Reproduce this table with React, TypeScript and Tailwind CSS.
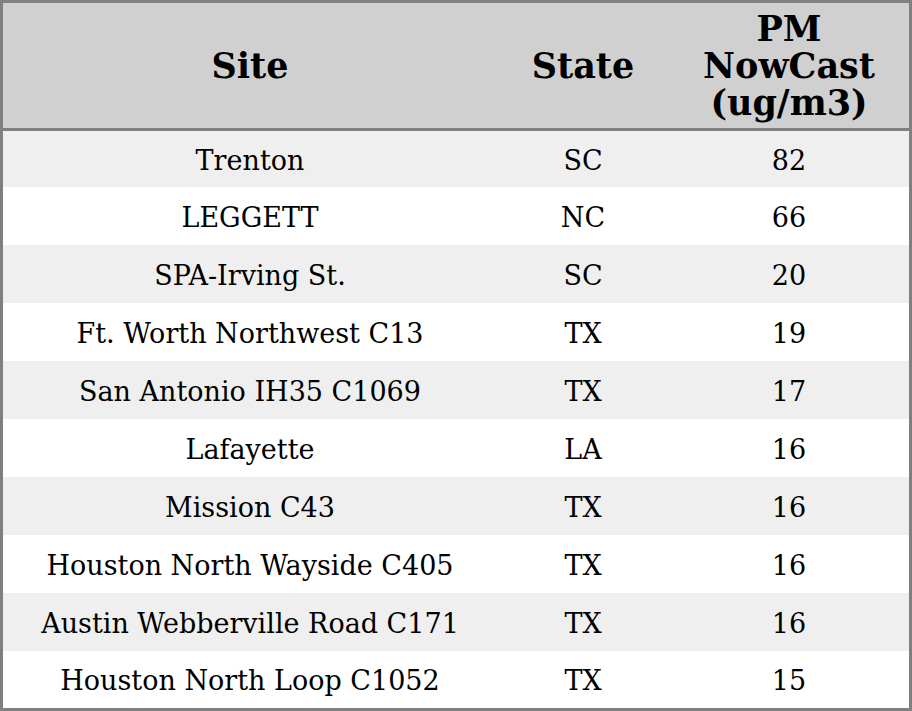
import React from 'react';

const rows: [string, string, string][] = [
    ['Trenton', 'SC', '82'],
    ['LEGGETT', 'NC', '66'],
    ['SPA-Irving St.', 'SC', '20'],
    ['Ft. Worth Northwest C13', 'TX', '19'],
    ['San Antonio IH35 C1069', 'TX', '17'],
    ['Lafayette', 'LA', '16'],
    ['Mission C43', 'TX', '16'],
    ['Houston North Wayside C405', 'TX', '16'],
    ['Austin Webberville Road C171', 'TX', '16'],
    ['Houston North Loop C1052', 'TX', '15'],
];

export default function App() {
    return (
        <div className="w-[912px] h-[711px] bg-white font-['DejaVu_Serif',serif] text-black">
            <div className="border-[3px] border-[#808080] flex flex-col">
                <div className="flex h-[128px] items-center bg-[#d0d0d0] border-b-[3px] border-[#808080] text-[35px] font-bold leading-[37px] text-center">
                    <div className="w-[494px]">Site</div>
                    <div className="w-[172px]">State</div>
                    <div className="flex-1">PM<br />NowCast<br />(ug/m3)</div>
                </div>
                {rows.map(([site, state, value], i) => (
                    <div
                        key={site}
                        className={`flex items-center pt-[4px] text-center text-[27px] ${i % 2 === 0 ? 'bg-[#efefef]' : 'bg-white'} ${i === 0 ? 'h-[56px]' : i === rows.length - 1 ? 'h-[57px]' : 'h-[58px]'}`}
                    >
                        <div className="w-[494px]">{site}</div>
                        <div className="w-[172px]">{state}</div>
                        <div className="flex-1">{value}</div>
                    </div>
                ))}
            </div>
        </div>
    );
}
